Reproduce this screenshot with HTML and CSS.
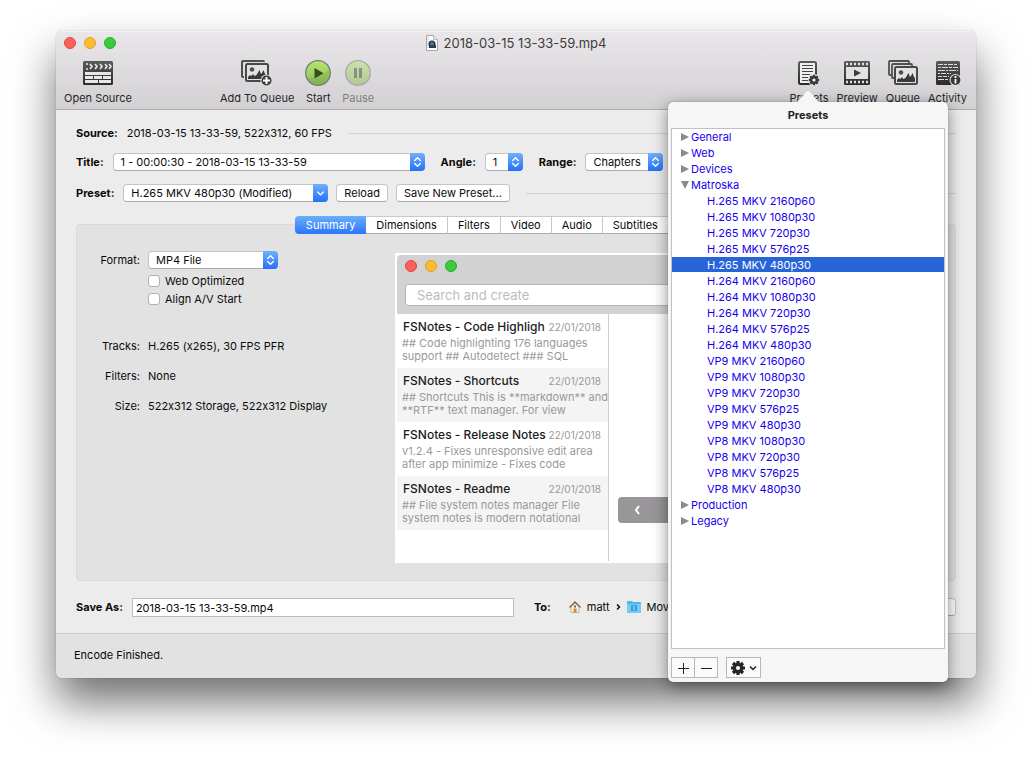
FILE: index.html
```html
<!DOCTYPE html>
<html lang="en">
<head>
<meta charset="utf-8">
<title>2018-03-15 13-33-59.mp4</title>
<link rel="stylesheet" href="styles.css">
</head>
<body>
<svg class="defs" aria-hidden="true">
  <defs>
    <linearGradient id="ink" x1="0" y1="0" x2="0" y2="1"><stop offset="0" stop-color="#5a5a5a"/><stop offset="1" stop-color="#2c2c2c"/></linearGradient>
    <linearGradient id="green" x1="0" y1="0" x2="0" y2="1"><stop offset="0" stop-color="#b4e673"/><stop offset=".55" stop-color="#9fd060"/><stop offset="1" stop-color="#8aba52"/></linearGradient>
    <symbol id="updown" viewBox="0 0 16 18"><path d="M5 7.500 8 4.500 11 7.500M5 10.500 8 13.500 11 10.500" fill="none" stroke="#fff" stroke-width="1.500" stroke-linecap="round" stroke-linejoin="round"/></symbol>
    <symbol id="down" viewBox="0 0 16 18"><path d="M5 8 8 11 11 8" fill="none" stroke="#fff" stroke-width="1.500" stroke-linecap="round" stroke-linejoin="round"/></symbol>
    <symbol id="gear" viewBox="-8 -8 16 16">
      <g stroke="currentColor" stroke-width="3.200"><path d="M0-7V7M-7 0H7M-5-5 5 5M-5 5 5-5"/></g>
      <circle r="5.300" fill="currentColor"/><circle r="2.100" fill="#f6f6f6"/>
    </symbol>
    <symbol id="landscape" viewBox="0 0 24 19">
      <rect x="1" y="1" width="22" height="17" rx="1.500" fill="#e4e3e4" stroke="#484848" stroke-width="2"/>
      <circle cx="7" cy="6.500" r="2.300" fill="#505050"/>
      <path d="M3 16v-2l2-2 1.500 1 1.500-2 1.500 2 2-1 3-5 1.500 4 1-1 1.500-3 1.500 4 1 1v4z" fill="#3a3a3a"/>
    </symbol>
  </defs>
</svg>

<main class="window">
  <header class="titlebar">
    <div class="title-row">
      <div class="lights"><i class="red"></i><i class="yellow"></i><i class="green"></i></div>
      <h1 class="title">
        <svg width="12" height="16" viewBox="0 0 12 16" aria-hidden="true"><path d="M.5.500h7l4 4v11H.500z" fill="#fff" stroke="#a9a9a9"/><path d="M7.500.500v4h4" fill="#eee" stroke="#b5b5b5"/><path d="M2 2v12" stroke="#aaa" stroke-dasharray="1 1"/><circle cx="6" cy="9" r="3.500" fill="#26323c"/><path d="M3 10h7v3H3z" fill="#3a3a3a"/><circle cx="6" cy="8.500" r="2" fill="#2f7fc4"/></svg>
        <span>2018-03-15 13-33-59.mp4</span>
      </h1>
    </div>
    <nav class="toolbar">
      <button class="tool open" type="button">
        <svg width="30" height="26" viewBox="0 0 30 26" aria-hidden="true"><rect y="1" width="30" height="24" rx="1.500" fill="url(#ink)"/>
          <g fill="#e8e7e8"><path d="M2 12h26v3H2zM2 16h8v3H2zM11 16h8v3h-8zM20 16h8v3h-8zM2 20h13v3H2zM16 20h12v3H16z"/></g>
          <path d="M3 4h2M3 9h2M7 4l2 2.500L7 9M12 4l2 2.500L12 9M17 4l2 2.500L17 9M22 4l2 2.500L22 9M26 4l2 2.500L26 9" fill="none" stroke="#e8e7e8" stroke-width="1.700"/></svg>
        <span>Open Source</span>
      </button>
      <button class="tool" type="button">
        <svg width="32" height="26" viewBox="0 0 32 26" aria-hidden="true"><path d="M3 17H2q-1 0-1-1V2q0-1 1-1h20q1 0 1 1" fill="none" stroke="#505050" stroke-width="2"/><use href="#landscape" x="4" y="3" width="24" height="19"/><circle cx="25.500" cy="20.500" r="6" fill="#dddcde"/><circle cx="25.500" cy="20.500" r="5" fill="#3a3a3a"/><path d="M25.500 17v7M22 20.500h7" stroke="#fff" stroke-width="2"/></svg>
        <span>Add To Queue</span>
      </button>
      <button class="tool" type="button">
        <svg width="26" height="26" viewBox="0 0 26 26" aria-hidden="true"><circle cx="13" cy="13" r="12.300" fill="url(#green)" stroke="#777b75" stroke-width="1.300"/><path d="M13 25A12 12 0 0 0 24 9Q20 16 3 18 7 25 13 25z" fill="#719f42" opacity=".3"/><path d="M9.500 8v10.500l9-5.200z" fill="#394a25"/></svg>
        <span>Start</span>
      </button>
      <button class="tool" type="button" disabled>
        <svg width="26" height="26" viewBox="0 0 26 26" aria-hidden="true"><circle cx="13" cy="13" r="12.300" fill="url(#green)" stroke="#777b75" stroke-width="1.300"/><path d="M9 8h3v10H9zM14 8h3v10h-3z" fill="#394a25"/></svg>
        <span>Pause</span>
      </button>
      <div class="tools-right">
        <button class="tool" type="button">
          <svg width="24" height="26" viewBox="0 0 24 26" aria-hidden="true"><rect x="2" y="2" width="17" height="22" rx="1.500" fill="#eee" stroke="url(#ink)" stroke-width="2"/><path d="M5 5.500h11M5 8.500h11M5 11.500h11M5 14.500h8M5 17.500h6M5 20.500h6" stroke="#444"/><circle cx="17" cy="20" r="6" fill="#e6e5e7"/><g class="ink"><use href="#gear" x="11" y="14" width="12" height="12"/></g></svg>
          <span>Presets</span>
        </button>
        <button class="tool" type="button">
          <svg width="26" height="26" viewBox="0 0 26 26" aria-hidden="true"><rect y="1" width="26" height="24" rx="1.500" fill="url(#ink)"/><path d="M2 7h22v12H2z" fill="#e2e1e3"/><path d="M2 4h23M2 22h23" stroke="#e2e1e3" stroke-width="2.500" stroke-dasharray="2 2"/><path d="M10 9.500v7l7-3.500z" fill="#3c3c3c"/></svg>
          <span>Preview</span>
        </button>
        <button class="tool" type="button">
          <svg width="30" height="26" viewBox="0 0 30 26" aria-hidden="true"><g fill="none" stroke="#505050" stroke-width="1.800"><path d="M3 15H2q-1 0-1-1V2q0-1 1-1h18q1 0 1 1v1"/><path d="M6 18H5q-1 0-1-1V5q0-1 1-1h18q1 0 1 1v1"/></g><use href="#landscape" x="6" y="6" width="24" height="19"/></svg>
          <span>Queue</span>
        </button>
        <button class="tool" type="button">
          <svg width="26" height="26" viewBox="0 0 26 26" aria-hidden="true"><rect x="1" y="1" width="24" height="24" rx="1.500" fill="url(#ink)"/><g stroke="#dcdcdc" stroke-width="1.200"><path d="M3 4.500h20" stroke-dasharray="5 1 3 1"/><path d="M3 7.500h20" stroke-dasharray="3 1 6 1"/><path d="M3 10.500h20" stroke-dasharray="7 1 2 1"/><path d="M3 13.500h13" stroke-dasharray="2 1 5 1"/><path d="M3 16.500h11" stroke-dasharray="4 1"/><path d="M3 19.500h10" stroke-dasharray="6 1"/></g><circle cx="20.500" cy="20" r="6" fill="#e1e0e2"/><circle cx="20.500" cy="20" r="4.900" fill="#383838"/><path d="M20.500 19v4.500M20.500 16v2" stroke="#fff" stroke-width="1.800"/></svg>
          <span>Activity</span>
        </button>
      </div>
    </nav>
  </header>

  <section class="content">
    <div class="row source"><strong>Source:</strong><span>2018-03-15 13-33-59, 522x312, 60 FPS</span><hr></div>
    <div class="row">
      <label class="bold" for="title">Title:</label>
      <span class="select w-title"><select id="title"><option>1 - 00:00:30 - 2018-03-15 13-33-59</option></select><svg><use href="#updown"/></svg></span>
      <label class="bold gap-left" for="angle">Angle:</label>
      <span class="select w-angle"><select id="angle"><option>1</option></select><svg><use href="#updown"/></svg></span>
      <label class="bold gap-left" for="range">Range:</label>
      <span class="select w-range"><select id="range"><option>Chapters</option></select><svg><use href="#updown"/></svg></span>
    </div>
    <div class="row preset-row">
      <label class="bold" for="preset">Preset:</label>
      <span class="select w-preset"><select id="preset"><option>H.265 MKV 480p30 (Modified)</option></select><svg><use href="#down"/></svg></span>
      <button class="push" type="button">Reload</button>
      <button class="push" type="button">Save New Preset...</button>
      <hr>
    </div>

    <div class="tabs" role="tablist">
      <button type="button" role="tab" aria-selected="true">Summary</button><button type="button" role="tab">Dimensions</button><button type="button" role="tab">Filters</button><button type="button" role="tab">Video</button><button type="button" role="tab">Audio</button><button type="button" role="tab">Subtitles</button><button type="button" role="tab">Chapters</button>
    </div>

    <section class="panel">
      <div class="summary">
        <label for="format">Format:</label>
        <span class="select w-format"><select id="format"><option>MP4 File</option></select><svg><use href="#updown"/></svg></span>
        <div class="checks">
          <label><input type="checkbox">Web Optimized</label>
          <label><input type="checkbox">Align A/V Start</label>
        </div>
        <span class="key">Tracks:</span><span>H.265 (x265), 30 FPS PFR</span>
        <span class="key">Filters:</span><span>None</span>
        <span class="key">Size:</span><span>522x312 Storage, 522x312 Display</span>
      </div>
      <div class="preview">
        <div class="notes-head">
          <div class="lights"><i class="red"></i><i class="yellow"></i><i class="green"></i></div>
          <input type="text" aria-label="Search and create" placeholder="Search and create">
        </div>
        <div class="notes-body">
          <ul class="notes">
            <li><div><b>FSNotes - Code Highligh</b><time>22/01/2018</time></div><p>## Code highlighting 176 languages<br>support ## Autodetect ### SQL</p></li>
            <li><div><b>FSNotes - Shortcuts</b><time>22/01/2018</time></div><p>## Shortcuts This is **markdown** and<br>**RTF** text manager. For view</p></li>
            <li><div><b>FSNotes - Release Notes</b><time>22/01/2018</time></div><p>v1.2.4 - Fixes unresponsive edit area<br>after app minimize - Fixes code</p></li>
            <li><div><b>FSNotes - Readme</b><time>22/01/2018</time></div><p>## File system notes manager File<br>system notes is modern notational</p></li>
          </ul>
        </div>
        <button class="prev" type="button" aria-label="Previous frame"><svg width="8" height="10" viewBox="0 0 8 10"><path d="M6 1 3 5l3 4" fill="none" stroke="#fff" stroke-width="2"/></svg></button>
      </div>
    </section>

    <div class="row save-row">
      <label class="bold" for="save">Save As:</label>
      <input class="save-input" id="save" type="text" value="2018-03-15 13-33-59.mp4">
      <strong class="to">To:</strong>
      <span class="path">
        <svg width="12" height="12" viewBox="0 0 12 12" aria-hidden="true"><path d="M2 5v6.500h8V5L6 2z" fill="#f3efe6" stroke="#999" stroke-width=".6"/><path d="M.5 6.500 6 1l5.500 5.500" fill="none" stroke="#8a6a4c" stroke-width="1.500"/><path d="M4.500 7.500h3v4h-3z" fill="#e08a1e"/><path d="M5 4.500h2v2H5z" fill="#667"/></svg>
        <span>matt</span>
        <svg width="5" height="8" viewBox="0 0 5 8" aria-hidden="true"><path d="M1 1.500 3.500 4 1 6.500" fill="none" stroke="#111" stroke-width="1.500"/></svg>
        <svg width="14" height="12" viewBox="0 0 14 12" aria-hidden="true"><path d="M0 1q0-1 1-1h4l1 1h7q1 0 1 1v9q0 1-1 1H1q-1 0-1-1z" fill="#54b4ea"/><path d="M0 3h14v8q0 1-1 1H1q-1 0-1-1z" fill="#74caf8"/><path d="M4 4h6v6H4z" fill="#3c9edb"/><path d="M6 5h2v1.500H6zM6 7.500h2V9H6z" fill="#8fd5fa"/></svg>
        <span>Movies</span>
      </span>
      <button class="push browse" type="button">Browse...</button>
    </div>
  </section>

  <footer class="status">Encode Finished.</footer>

  <aside class="popover" aria-label="Presets">
    <svg class="arrow" width="28" height="13" viewBox="0 0 28 13" aria-hidden="true"><path d="M0 13Q3 13 5 10L12 2Q14 0 16 2L23 10Q25 13 28 13z" fill="#f6f6f6"/></svg>
    <h2>Presets</h2>
    <ul class="tree" role="tree">
      <li class="shut">General</li>
      <li class="shut">Web</li>
      <li class="shut">Devices</li>
      <li class="expanded">Matroska
        <ul role="group">
          <li>H.265 MKV 2160p60</li><li>H.265 MKV 1080p30</li><li>H.265 MKV 720p30</li><li>H.265 MKV 576p25</li><li class="selected">H.265 MKV 480p30</li>
          <li>H.264 MKV 2160p60</li><li>H.264 MKV 1080p30</li><li>H.264 MKV 720p30</li><li>H.264 MKV 576p25</li><li>H.264 MKV 480p30</li>
          <li>VP9 MKV 2160p60</li><li>VP9 MKV 1080p30</li><li>VP9 MKV 720p30</li><li>VP9 MKV 576p25</li><li>VP9 MKV 480p30</li>
          <li>VP8 MKV 1080p30</li><li>VP8 MKV 720p30</li><li>VP8 MKV 576p25</li><li>VP8 MKV 480p30</li>
        </ul>
      </li>
      <li class="shut">Production</li>
      <li class="shut">Legacy</li>
    </ul>
    <div class="actions">
      <div class="pair">
        <button type="button" aria-label="Add preset"><svg width="12" height="12" viewBox="0 0 12 12"><path d="M1 6.500h11M6.500 1v11" stroke="#222"/></svg></button>
        <button type="button" aria-label="Remove preset"><svg width="12" height="12" viewBox="0 0 12 12"><path d="M1 6.500h11" stroke="#222"/></svg></button>
      </div>
      <button class="menu" type="button" aria-label="Preset options"><svg width="16" height="16"><use href="#gear"/></svg><svg width="8" height="6" viewBox="0 0 8 6"><path d="M1 1.500 4 4.500 7 1.500" fill="none" stroke="#222" stroke-width="1.500"/></svg></button>
    </div>
  </aside>
</main>
</body>
</html>
```

FILE: styles.css
```css
* { box-sizing: border-box; }

body {
  margin: 0;
  padding: 31px 56px 80px;
  background: #fff;
  color: #0a0a0a;
  font: 11px/16px Inter, "Liberation Sans", sans-serif;
  font-variant-ligatures: no-contextual;
}

button, input, select { font: inherit; font-variant-ligatures: inherit; color: inherit; margin: 0; }
ul { list-style: none; margin: 0; padding: 0; }
svg { display: block; flex: none; }
.defs { position: absolute; width: 0; height: 0; }
hr { flex: 1; height: 1px; margin: 0; border: 0; background: #d3d3d3; }
.bold, strong { font-weight: 700; }

.window {
  position: relative;
  border-radius: 6px;
  background: #ececec;
  box-shadow: 0 0 1px rgba(0, 0, 0, .5), 0 24px 44px rgba(0, 0, 0, .56);
}

/* Title bar and toolbar */
.titlebar {
  height: 79px;
  border-bottom: 1px solid #aeacaf;
  border-radius: 6px 6px 0 0;
  background: linear-gradient(#e9e7e9, #d2d0d3);
  box-shadow: inset 0 1px #f5f4f5;
}
.title-row {
  display: grid;
  grid-template-columns: 1fr auto 1fr;
  align-items: center;
  height: 24px;
  padding: 0 8px;
}
.lights { display: flex; gap: 8px; }
.lights i { width: 12px; height: 12px; border: 1px solid; border-radius: 50%; }
.lights .red { background: #fc605b; border-color: #e0453f; }
.lights .yellow { background: #fdbc2f; border-color: #dfa023; }
.lights .green { background: #3ccb3c; border-color: #29ab2c; }
.title {
  display: flex;
  align-items: center;
  gap: 6px;
  margin: 0;
  font-size: 13px;
  font-weight: 400;
  color: #3e3c3e;
}
.toolbar { display: flex; gap: 11px; padding: 5px 9px 0 8px; }
.tool {
  display: flex;
  flex-direction: column;
  align-items: center;
  gap: 4px;
  padding: 0;
  border: 0;
  background: none;
  color: #262626;
  white-space: nowrap;
}
.tool:disabled { opacity: .5; }
.open { margin-right: 77px; }
.tools-right { display: flex; gap: 8px; margin-left: auto; }
.ink { color: #3a3a3a; }

/* Source, title and preset rows */
.content { padding: 14px 20px 17px; }
.row { display: flex; align-items: center; height: 18px; margin-bottom: 13px; white-space: nowrap; }
.source { gap: 9px; margin-bottom: 11px; }
.source hr { margin-left: 7px; }
.row > .select { margin-left: 9px; }
.row > .gap-left { margin-left: 16px; }
.push {
  height: 18px;
  margin-left: 8px;
  padding: 0 7px;
  border: 1px solid #c4c4c4;
  border-bottom-color: #a9a9a9;
  border-radius: 4px;
  background: #fff;
  line-height: 16px;
}
.preset-row { margin-bottom: 14px; }
.preset-row hr { margin-left: 16px; }

.select { position: relative; display: block; height: 18px; }
.select select {
  appearance: none;
  display: block;
  width: 100%;
  height: 18px;
  padding: 0 18px 0 7px;
  border: 1px solid #c4c4c4;
  border-bottom-color: #a9a9a9;
  border-radius: 4px;
  background: #fff;
  line-height: 16px;
}
.select svg {
  position: absolute;
  top: 0;
  right: 0;
  width: 15px;
  height: 18px;
  border-radius: 0 4px 4px 0;
  background: linear-gradient(#70b0fb, #2670fa);
  pointer-events: none;
}
.w-title { width: 312px; }
.w-angle { width: 38px; }
.w-range { width: 78px; }
.w-preset { width: 205px; }
.w-format { width: 130px; }

/* Tabs sit across the top edge of the panel */
.tabs { position: relative; display: flex; justify-content: center; margin-bottom: -10px; }
.tabs button {
  height: 18px;
  padding: 0 10px;
  border: 1px solid #c9c9c9;
  border-bottom-color: #a9a9a9;
  border-left-width: 0;
  background: #fff;
  line-height: 16px;
}
.tabs button:first-child {
  border: 0;
  border-radius: 4px 0 0 4px;
  padding: 0 11px;
  background: linear-gradient(#6bb0fa, #2a74fb);
  color: #fff;
}
.tabs button:last-child { border-radius: 0 4px 4px 0; }

.panel {
  display: flex;
  padding: 26px 38px 17px 0;
  border: 1px solid #d9d9d9;
  border-radius: 4px;
  background: #e2e2e2;
}
.summary {
  display: grid;
  grid-template-columns: 63px 1fr;
  grid-template-rows: 18px 62px 30px 30px 30px;
  align-content: start;
  align-items: center;
  column-gap: 8px;
  flex: 0 0 318px;
  padding-right: 12px;
  white-space: nowrap;
}
.summary > label, .key { text-align: right; }
.summary .checks { grid-column: 2; align-self: start; padding-top: 3px; }
.checks label { display: flex; align-items: center; gap: 5px; height: 18px; }
.checks input {
  appearance: none;
  width: 12px;
  height: 12px;
  border: 1px solid #b0b0b0;
  border-radius: 3px;
  background: #fff;
}

/* Video frame */
.preview {
  position: relative;
  display: flex;
  flex: 1;
  flex-direction: column;
  height: 310px;
  margin-top: 2px;
  padding: 2px;
  background: #fff;
}
.notes-head { height: 59px; padding: 5px 8px; border-radius: 4px 0 0 0; background: #d2d2d2; }
.notes-head input {
  display: block;
  width: 100%;
  height: 22px;
  margin-top: 12px;
  padding: 0 11px;
  border: 1px solid #b5b5b5;
  border-radius: 3px;
  background: #fff;
  font-size: 13px;
}
.notes-head input::placeholder { color: #bcbcbc; opacity: 1; }
.notes-body { display: flex; flex: 1; }
.notes { width: 212px; border-right: 1px solid #ccc; color: #999; }
.notes li { height: 54px; padding: 5px 7px 0 5px; white-space: nowrap; }
.notes li:nth-child(even) { background: #f4f4f4; }
.notes li div { display: flex; justify-content: space-between; padding-left: 1px; }
.notes b { width: 146px; overflow: hidden; font-size: 12px; font-weight: 500; color: #1c1c1c; }
.notes time { font-size: 10px; }
.notes p { margin: 2px 0 0; line-height: 13px; }
.prev {
  position: absolute;
  left: 223px;
  bottom: 40px;
  width: 76px;
  height: 26px;
  padding: 0 15px;
  border: 0;
  border-radius: 4px;
  background: #99969a;
}

/* Destination */
.save-row { margin: 17px 0 0; }
.save-input {
  width: 382px;
  height: 19px;
  margin-left: 9px;
  padding: 1px 4px 0 3px;
  border: 1px solid #bdbdbd;
  background: #fff;
}
.to { margin-left: 20px; }
.path { display: flex; align-items: center; gap: 6px; margin-left: 18px; }
.browse { margin-left: auto; }
.status {
  height: 45px;
  padding: 13px 18px;
  border-top: 1px solid #cfcfcf;
  border-radius: 0 0 6px 6px;
  background: #e2e2e2;
}

/* Presets popover */
.popover {
  position: absolute;
  top: 71px;
  right: 28px;
  width: 280px;
  padding: 5px 3px 4px;
  border-radius: 5px;
  background: #f6f6f6;
  box-shadow: 0 0 1px rgba(0, 0, 0, .5), 0 4px 16px rgba(0, 0, 0, .45);
}
.arrow { position: absolute; top: -12px; left: 126px; }
.popover h2 { margin: 0 0 5px; font-size: 11px; font-weight: 700; text-align: center; color: #222; }
.tree { height: 521px; border: 1px solid #c1c1c1; background: #fff; color: #1500f0; }
.tree li { min-height: 16px; }
.tree > li { position: relative; padding-left: 19px; }
.tree > li::before {
  content: "";
  position: absolute;
  top: 4px;
  left: 9px;
  width: 8px;
  height: 8px;
  background: #8b8b8b;
  clip-path: polygon(0 0, 100% 50%, 0 100%);
}
.tree > .expanded::before { clip-path: polygon(0 0, 100% 0, 50% 100%); }
.tree ul { margin-left: -19px; }
.tree ul li { padding-left: 35px; }
.tree ul .selected { height: 16px; border-bottom: 1px solid #fff; background: #2864d9; color: #fff; }
.actions { display: flex; gap: 8px; margin-top: 8px; }
.pair { display: flex; }
.actions button {
  display: flex;
  align-items: center;
  justify-content: center;
  gap: 3px;
  width: 24px;
  height: 21px;
  padding: 0;
  border: 1px solid #b8b8b8;
  background: #fafafa;
  color: #262626;
}
.pair button + button { margin-left: -1px; }
.actions .menu { width: 35px; }
```
